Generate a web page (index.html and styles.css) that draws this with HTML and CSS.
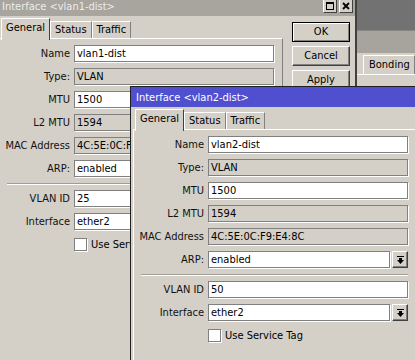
FILE: index.html
```html
<!DOCTYPE html>
<html>
<head>
    <meta charset="utf-8">
    <title>Interface</title>
    <link rel="stylesheet" href="styles.css">
</head>
<body>
<div class="desktop">

    <!-- interface list window, behind the dialogs -->
    <div class="backwin">
        <div class="bw-top"></div>
        <div class="bw-toolbar"></div>
        <div class="bw-tabs"><span class="bw-tab">Bonding</span></div>
        <div class="bw-panel"></div>
    </div>

    <!-- vlan1 dialog (inactive) -->
    <div class="win win1">
        <div class="titlebar">
            <span class="title">Interface &lt;vlan1-dist&gt;</span>
            <span class="tbtn"><svg width="8" height="8" viewBox="0 0 8 8"><rect x="0.5" y="0.5" width="7" height="7" fill="none" stroke="#000"/><rect x="0" y="0" width="8" height="2" fill="#000"/></svg></span>
            <span class="tbtn"><svg width="8" height="8" viewBox="0 0 8 8"><path d="M1 1 L7 7 M7 1 L1 7" stroke="#000" stroke-width="1.8"/></svg></span>
        </div>
        <div class="winbody">
            <div class="dialog">
                <div class="tabs">
                    <span class="tab active">General</span>
                    <span class="tab">Status</span>
                    <span class="tab">Traffic</span>
                </div>
                <div class="panel">
                    <div class="row"><span class="lbl">Name</span><span class="field">vlan1-dist</span></div>
                    <div class="row"><span class="lbl">Type:</span><span class="field ro">VLAN</span></div>
                    <div class="row"><span class="lbl">MTU</span><span class="field">1500</span></div>
                    <div class="row"><span class="lbl">L2 MTU</span><span class="field ro">1594</span></div>
                    <div class="row"><span class="lbl">MAC Address</span><span class="field ro">4C:5E:0C:F9:E4:8C</span></div>
                    <div class="row"><span class="lbl">ARP:</span>
                        <span class="combo"><span class="field">enabled</span><span class="dd"><svg width="7" height="8" viewBox="0 0 7 8"><rect x="0" y="0" width="7" height="1" fill="#000"/><rect x="2" y="2" width="3" height="3" fill="#000"/><path d="M0 4 L7 4 L3.5 8 Z" fill="#000"/></svg></span></span>
                    </div>
                    <div class="sep"></div>
                    <div class="row"><span class="lbl">VLAN ID</span><span class="field">25</span></div>
                    <div class="row"><span class="lbl">Interface</span>
                        <span class="combo"><span class="field">ether2</span><span class="dd"><svg width="7" height="8" viewBox="0 0 7 8"><rect x="0" y="0" width="7" height="1" fill="#000"/><rect x="2" y="2" width="3" height="3" fill="#000"/><path d="M0 4 L7 4 L3.5 8 Z" fill="#000"/></svg></span></span>
                    </div>
                    <div class="row"><span class="lbl"></span><span class="check"><span class="box"></span>Use Service Tag</span></div>
                </div>
            </div>
            <div class="buttons">
                <span class="btn default">OK</span>
                <span class="btn">Cancel</span>
                <span class="btn">Apply</span>
            </div>
        </div>
    </div>

    <!-- vlan2 dialog (active) -->
    <div class="win win2">
        <div class="titlebar">
            <span class="title">Interface &lt;vlan2-dist&gt;</span>
        </div>
        <div class="winbody">
            <div class="dialog">
                <div class="tabs">
                    <span class="tab active">General</span>
                    <span class="tab">Status</span>
                    <span class="tab">Traffic</span>
                </div>
                <div class="panel">
                    <div class="row"><span class="lbl">Name</span><span class="field">vlan2-dist</span></div>
                    <div class="row"><span class="lbl">Type:</span><span class="field ro">VLAN</span></div>
                    <div class="row"><span class="lbl">MTU</span><span class="field">1500</span></div>
                    <div class="row"><span class="lbl">L2 MTU</span><span class="field ro">1594</span></div>
                    <div class="row"><span class="lbl">MAC Address</span><span class="field ro">4C:5E:0C:F9:E4:8C</span></div>
                    <div class="row"><span class="lbl">ARP:</span>
                        <span class="combo"><span class="field">enabled</span><span class="dd"><svg width="7" height="8" viewBox="0 0 7 8"><rect x="0" y="0" width="7" height="1" fill="#000"/><rect x="2" y="2" width="3" height="3" fill="#000"/><path d="M0 4 L7 4 L3.5 8 Z" fill="#000"/></svg></span></span>
                    </div>
                    <div class="sep"></div>
                    <div class="row"><span class="lbl">VLAN ID</span><span class="field">50</span></div>
                    <div class="row"><span class="lbl">Interface</span>
                        <span class="combo"><span class="field">ether2</span><span class="dd"><svg width="7" height="8" viewBox="0 0 7 8"><rect x="0" y="0" width="7" height="1" fill="#000"/><rect x="2" y="2" width="3" height="3" fill="#000"/><path d="M0 4 L7 4 L3.5 8 Z" fill="#000"/></svg></span></span>
                    </div>
                    <div class="row"><span class="lbl"></span><span class="check"><span class="box"></span>Use Service Tag</span></div>
                </div>
            </div>
        </div>
    </div>

</div>
</body>
</html>
```

FILE: styles.css
```css
body {
    margin: 0;
    background: #d4d0c8;
    font-family: "DejaVu Sans Condensed", "DejaVu Sans", sans-serif;
    font-size: 11px;
    color: #000;
}

.desktop {
    position: relative;
    width: 415px;
    height: 360px;
    overflow: hidden;
}

/* window behind */
.backwin {
    position: absolute;
    left: 300px;
    top: 0;
    width: 115px;
    height: 360px;
}
.bw-top {
    height: 30px;
    background: #727272;
}
.bw-toolbar {
    height: 22px;
    background: #a7a39d;
    border-top: 1px solid #8a8782;
}
.bw-tabs {
    height: 21px;
    padding-left: 63px;
    display: flex;
    align-items: flex-end;
}
.bw-tab {
    height: 18px;
    line-height: 18px;
    padding: 0 4px 0 5px;
    border-left: 1px solid #fff;
    border-top: 1px solid #fff;
    border-right: 1px solid #808080;
}
.bw-panel {
    border-top: 1px solid #fff;
}

/* dialog windows */
.win {
    position: absolute;
    box-sizing: border-box;
    width: 361px;
    height: 420px;
    background: #d4d0c8;
    border: 1px solid #404040;
}
.win1 {
    left: -4px;
    top: -5px;
    border-right: 2px solid #404040;
}
.win2 {
    left: 130px;
    top: 86px;
    border-color: #202020;
}

.titlebar {
    height: 20px;
    display: flex;
    align-items: center;
    padding-left: 5px;
    background: #a8a49e;
    color: #ececec;
    white-space: nowrap;
}
.win2 .titlebar {
    background: #4f4fd0;
    color: #fff;
}
.title {
    flex: 1;
}
.tbtn {
    box-sizing: border-box;
    width: 14px;
    height: 14px;
    margin-right: 2px;
    display: flex;
    align-items: center;
    justify-content: center;
    background: #d4d0c8;
    border: 1px solid;
    border-color: #fff #404040 #404040 #fff;
}
.tbtn:last-child {
    margin-right: 2px;
}

.winbody {
    display: flex;
    align-items: flex-start;
}
.dialog {
    width: 284px;
    margin-left: 2px;
    flex: none;
}

.tabs {
    display: flex;
    align-items: flex-start;
    height: 20px;
    margin-top: 2px;
    padding-left: 2px;
    position: relative;
    z-index: 1;
}
.tab {
    box-sizing: border-box;
    height: 17px;
    margin-top: 3px;
    line-height: 16px;
    padding: 0 4px;
    border-left: 1px solid #fff;
    border-top: 1px solid #fff;
    border-right: 1px solid #808080;
    background: #d4d0c8;
    white-space: nowrap;
}
.tab.active {
    height: 22px;
    margin-top: 0;
    line-height: 18px;
    padding: 0 4px 0 4px;
    border-right-color: #404040;
}

.panel {
    height: 400px;
    padding: 6px 8px 0 0;
    border-top: 1px solid #fff;
    border-left: 1px solid #fff;
    border-right: 1px solid #808080;
}

.row {
    display: grid;
    grid-template-columns: 70px 1fr;
    column-gap: 4px;
    height: 17px;
    margin-bottom: 6px;
    align-items: center;
}
.lbl {
    text-align: right;
    white-space: nowrap;
    overflow: hidden;
    color: #111;
}
.field {
    box-sizing: border-box;
    height: 17px;
    line-height: 15px;
    padding: 0 2px;
    background: #fff;
    border: 1px solid #808080;
    box-shadow: 1px 1px 0 #fff;
    white-space: nowrap;
    overflow: hidden;
}
.field.ro {
    background: #d4d0c8;
}
.combo {
    display: flex;
    gap: 2px;
}
.combo .field {
    flex: 1;
}
.dd {
    box-sizing: border-box;
    width: 16px;
    height: 17px;
    display: flex;
    align-items: center;
    justify-content: center;
    border: 1px solid;
    border-color: #fff #404040 #404040 #fff;
    box-shadow: inset -1px -1px 0 #808080;
}

.sep {
    height: 1px;
    margin: 3px 0 5px 7px;
    background: #a09d97;
    border-bottom: 1px solid #fff;
}

.check {
    display: flex;
    align-items: center;
    gap: 4px;
    white-space: nowrap;
}
.box {
    box-sizing: border-box;
    width: 13px;
    height: 13px;
    background: #fff;
    border: 1px solid #808080;
    box-shadow: 1px 1px 0 #fff;
}

.buttons {
    display: flex;
    flex-direction: column;
    gap: 4px;
    margin: 6px 0 0 9px;
}
.btn {
    box-sizing: border-box;
    width: 58px;
    height: 20px;
    line-height: 18px;
    text-align: center;
    border: 1px solid;
    border-color: #fff #404040 #404040 #fff;
    box-shadow: inset -1px -1px 0 #808080;
}
.btn.default {
    border-color: #000;
    box-shadow: inset 1px 1px 0 #fff, inset -1px -1px 0 #808080;
}
```
